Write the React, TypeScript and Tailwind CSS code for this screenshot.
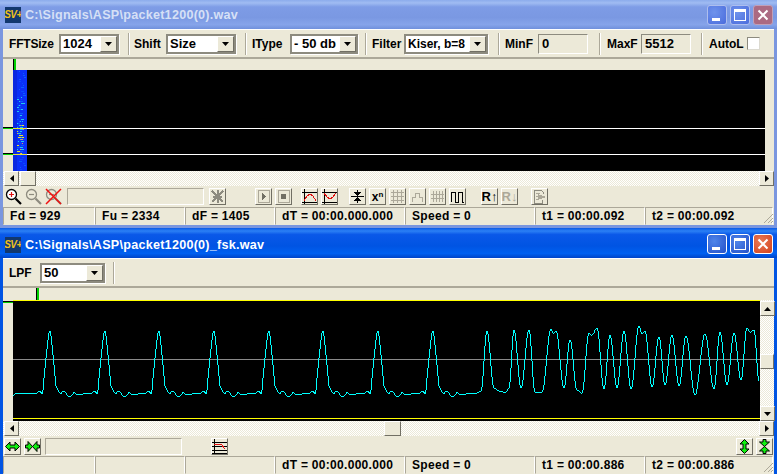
import React from "react";

const FONT = "font-['Liberation_Sans',Arial,sans-serif] font-bold text-[12px] leading-none text-black";
const RAISED = "border border-t-white border-l-white border-r-[#716f64] border-b-[#716f64] bg-[#ece9d8]";
const DITHER = "bg-[repeating-conic-gradient(#ffffff_0_25%,#ece9d8_0_50%)] bg-[length:2px_2px]";

// ---- signal data ----
const PULSE: [number, number][] = [
  [-12, 393], [-11, 392], [-9, 391], [-7, 394], [-6, 390], [-5, 378], [-3, 358], [-1, 340], [0, 333], [1, 331],
  [2, 336], [3, 345], [5, 365], [6, 376], [7, 386], [9, 390], [10, 392], [12, 394], [13, 392], [15, 391],
  [17, 393], [18, 395], [20, 397], [22, 396], [24, 394], [25, 392], [27, 394], [34, 394], [41, 393],
];
const PEAKS = [49, 104, 158, 213, 268, 322, 377, 432];
const BURST: [number, number][] = [
  [475, 393], [481, 391], [487, 331], [494, 388], [500, 391], [506, 392], [509, 388], [514, 330], [521, 388],
  [529, 330], [535, 392], [542, 392], [551, 329], [553, 333], [556, 331], [564, 388], [570, 340], [577, 390],
  [582, 393], [589, 333], [592, 335], [597, 328], [604, 389], [610, 335], [617, 388], [624, 331], [631, 389],
  [639, 326], [642, 334], [645, 331], [652, 387], [659, 337], [665, 385], [672, 335], [679, 386], [686, 336],
  [695, 395], [705, 334], [714, 389], [720, 332], [727, 385], [734, 333], [741, 380], [747, 328], [750, 332],
  [754, 330], [759, 381],
];

function wavePoints() {
  const pts: string[] = ["13,396", "15,394"];
  for (const p of PEAKS) for (const [dx, y] of PULSE) pts.push(p + dx + "," + y);
  for (let i = 0; i < BURST.length - 1; i++) {
    const [x0, y0] = BURST[i];
    const [x1, y1] = BURST[i + 1];
    for (let x = x0; x < x1; x++) {
      const t = (x - x0) / (x1 - x0);
      const y = y0 + ((y1 - y0) * (1 - Math.cos(t * Math.PI))) / 2;
      pts.push(x + "," + Math.round(y));
    }
  }
  pts.push("759,381");
  return pts.map((s) => {
    const [x, y] = s.split(",").map(Number);
    return x - 13 + "," + (y - 300);
  }).join(" ");
}

// spectrogram speckle, fixed seed so it's the same on every load
function speckle() {
  const out: { x: number; y: number; w: number; c: string }[] = [];
  let s = 17;
  const rnd = () => ((s = (s * 16807) % 2147483647) / 2147483647);
  for (let y = 1; y < 100; y += 2) {
    const hot = y > 26 && y < 84;
    const n = hot ? 3 : 1;
    for (let i = 0; i < n; i++) {
      const x = (hot ? 4 : 6) + Math.floor(rnd() * 6);
      const w = 1 + Math.floor(rnd() * 3);
      let c = rnd() > 0.5 ? "#0a5cff" : "#0a48ff";
      if (hot && rnd() > 0.5) c = "#20c8f0";
      if (y > 54 && y < 84 && rnd() > 0.5) c = rnd() > 0.4 ? "#f0e820" : "#f09050";
      out.push({ x, y, w, c });
    }
  }
  return out;
}

// ---- small pieces ----
function Arrow({ d = "down" }: { d?: "down" | "up" | "left" | "right" }) {
  const pts = { down: "0,0 7,0 3.5,4", up: "0,4 7,4 3.5,0", left: "4,0 4,7 0,3.5", right: "0,0 0,7 4,3.5" }[d];
  const box = d === "down" || d === "up" ? "0 0 7 4" : "0 0 4 7";
  return (
    <svg viewBox={box} className={d === "down" || d === "up" ? "w-[7px] h-[4px]" : "w-[4px] h-[7px]"}>
      <polygon points={pts} fill="#000" />
    </svg>
  );
}

function Combo({ value, className, tight }: { value: string; className: string; tight?: boolean }) {
  return (
    <div className={"h-[20px] flex items-stretch border-2 border-t-[#8d8b7f] border-l-[#8d8b7f] border-r-[#8d8b7f] border-b-[#8d8b7f] bg-white shadow-[1px_1px_0_#ffffff] " + className}>
      <span className={FONT + " flex-1 min-w-0 flex items-center pl-[2px] whitespace-nowrap overflow-hidden " + (tight ? "text-[12px]" : "text-[13px]")}>{value}</span>
      <span className={RAISED + " w-[17px] shrink-0 flex items-center justify-center border-r-[#8d8b7f] border-b-[#8d8b7f]"}>
        <Arrow />
      </span>
    </div>
  );
}

function Edit({ value }: { value: string }) {
  return (
    <div className={FONT + " w-[50px] h-[20px] pl-[3px] pt-[2px] text-[13px] border border-t-[#8d8b7f] border-l-[#8d8b7f] border-r-white border-b-white bg-[#ece9d8]"}>
      {value}
    </div>
  );
}

function Sep({ className = "" }: { className?: string }) {
  return <div className={"w-[2px] h-[22px] border-l border-l-[#aca899] border-r border-r-white " + className} />;
}

function Label({ children, className = "" }: { children: React.ReactNode; className?: string }) {
  return <span className={FONT + " " + className}>{children}</span>;
}

function WinButtons({ active }: { active: boolean }) {
  const base = "w-[20px] h-[20px] rounded-[3px] flex items-center justify-center ";
  const blue = active
    ? "border border-white bg-[radial-gradient(circle_at_35%_35%,#4f85ea,#2450c8)]"
    : "border border-[#aebeee] bg-[radial-gradient(circle_at_35%_35%,#6f93ec,#4a6bdc)]";
  const red = active
    ? "border border-white bg-[radial-gradient(circle_at_35%_35%,#ea7a55,#d2401c)]"
    : "border border-[#c0a0b8] bg-[#ab6a82]";
  return (
    <div className="flex items-center gap-[3px]">
      <div className={base + blue + " items-end pb-[3px]"}>
        <div className="w-[8px] h-[3px] bg-white -translate-x-[1px]" />
      </div>
      <div className={base + blue}>
        <div className="w-[12px] h-[12px] border border-white border-t-[3px]" />
      </div>
      <div className={base + red}>
        <svg viewBox="0 0 12 12" className="w-[12px] h-[12px]">
          <path d="M1.5 1.5 L10.5 10.5 M10.5 1.5 L1.5 10.5" stroke="#fff" strokeWidth="2" />
        </svg>
      </div>
    </div>
  );
}

function TitleBar({ title, active }: { title: string; active: boolean }) {
  const bg = active
    ? "h-[30px] pt-[2px] bg-[linear-gradient(180deg,#0a5ae6_0%,#2b80f5_10%,#0a58e8_22%,#0054e3_60%,#0060f0_85%,#0044c8_100%)]"
    : "h-[29px] bg-[linear-gradient(180deg,#8cacec_0%,#a0bcf2_10%,#7e9ce6_24%,#7a98e2_60%,#86a4ea_85%,#7090dc_100%)]";
  return (
    <div className={"shrink-0 flex items-center pl-[5px] pr-[4px] " + bg}>
      <div className="w-[16px] h-[16px] mt-[1px] bg-[#12386e] flex items-center justify-center overflow-hidden">
        <span className="font-['Liberation_Sans',sans-serif] font-bold italic text-[10px] leading-none tracking-[-0.5px] text-[#f0c020]">
          SV+
        </span>
      </div>
      <span className={"ml-[4px] mt-[2px] flex-1 font-['Liberation_Sans',sans-serif] font-bold text-[12.6px] tracking-[0.25px] " + (active ? "text-white" : "text-[#d6e0f6]")}>
        {title}
      </span>
      <WinButtons active={active} />
    </div>
  );
}

function ScrollBtn({ d, className = "" }: { d: "left" | "right" | "up" | "down"; className?: string }) {
  return (
    <div className={RAISED + " w-[15px] h-[15px] shrink-0 flex items-center justify-center " + className}>
      <Arrow d={d} />
    </div>
  );
}

function StatusBar({ cells }: { cells: [string, string][] }) {
  return (
    <div className="h-[18px] shrink-0 flex items-stretch bg-[#ece9d8] relative">
      {cells.map(([text, w], i) => (
        <div
          key={i}
          className={FONT + " " + w + " h-full shrink-0 flex items-center pl-[6px] text-[12.5px] tracking-[0.3px] border border-t-[#aca899] border-l-[#aca899] border-r-white border-b-transparent"}
        >
          {text}
        </div>
      ))}
      <svg viewBox="0 0 12 12" className="absolute right-[0px] bottom-[1px] w-[12px] h-[12px]">
        <path d="M11 2 L2 11 M11 6 L6 11 M11 9 L9 11" stroke="#aca899" strokeWidth="1" />
      </svg>
    </div>
  );
}

function Tool({ className = "", children, flat }: { className?: string; children: React.ReactNode; flat?: boolean }) {
  return (
    <div className={(flat ? "" : RAISED + " ") + "w-[17px] h-[17px] shrink-0 flex items-center justify-center " + className}>
      {children}
    </div>
  );
}

const Icon = ({ children }: { children: React.ReactNode }) => (
  <svg viewBox="0 0 15 15" className="w-[15px] h-[15px]" fill="none" shapeRendering="crispEdges">
    {children}
  </svg>
);

function Magnifier({ dim, plus }: { dim?: boolean; plus?: boolean }) {
  const c = dim ? "#8d8b7f" : "#000";
  return (
    <svg viewBox="0 0 17 17" className="w-[17px] h-[17px]" fill="none">
      <circle cx="6.5" cy="6.5" r="5" stroke={c} strokeWidth="1.3" fill={dim ? "#ece9d8" : "#fff"} />
      <path d="M10.5 10.5 L16 16" stroke={c} strokeWidth="2.2" />
      <path d={plus ? "M4 6.5 H9 M6.5 4 V9" : "M4 6.5 H9"} stroke={dim ? "#8d8b7f" : "#e01010"} strokeWidth="1.2" />
    </svg>
  );
}

function DoubleArrow({ vertical, inward }: { vertical?: boolean; inward?: boolean }) {
  const h = inward
    ? "M0.5 6 H3 V2.5 L7.5 7.5 L3 12.5 V9 H0.5 Z M14.5 6 H12 V2.5 L7.5 7.5 L12 12.5 V9 H14.5 Z"
    : "M0.5 7.5 L5 3 L5 6 L10 6 L10 3 L14.5 7.5 L10 12 L10 9 L5 9 L5 12 Z";
  return (
    <svg viewBox="0 0 15 15" className="w-[15px] h-[15px]">
      <path d={h} fill="#10f010" stroke="#000" strokeWidth="1" transform={vertical ? "rotate(90 7.5 7.5)" : undefined} />
    </svg>
  );
}

function ChartIcon({ curve, color = "#e01010" }: { curve: string; color?: string }) {
  return (
    <Icon>
      <path d="M2 0 V15 M0 13 H15 M0 3 H15" stroke="#000" />
      <path d={curve} stroke={color} strokeWidth="1" />
    </Icon>
  );
}

const GRID = "M1 3 H14 M1 7 H14 M1 11 H14 M3 1 V14 M7 1 V14 M11 1 V14";

// ---- windows ----
function TopToolbar() {
  return (
    <div className="h-[30px] shrink-0 flex items-center bg-[#ece9d8] border-t border-t-white border-b-2 border-b-[#aca899] pl-[6px] mt-0">
      <Label className="w-[50px] tracking-[-0.2px]">FFTSize</Label>
      <Combo value="1024" className="w-[60px]" />
      <Sep className="ml-[9px]" />
      <Label className="ml-[4px] w-[32px]">Shift</Label>
      <Combo value="Size" className="w-[70px]" />
      <Sep className="ml-[9px]" />
      <Label className="ml-[5px] w-[38px]">IType</Label>
      <Combo value="- 50 db" className="w-[68px]" />
      <Sep className="ml-[7px]" />
      <Label className="ml-[5px] w-[32px]">Filter</Label>
      <Combo value="Kiser, b=8" className="w-[84px]" tight />
      <Sep className="ml-[10px]" />
      <Label className="ml-[5px] w-[33px]">MinF</Label>
      <Edit value="0" />
      <Sep className="ml-[11px]" />
      <Label className="ml-[6px] w-[34px]">MaxF</Label>
      <Edit value="5512" />
      <Sep className="ml-[10px]" />
      <Label className="ml-[6px] w-[38px]">AutoL</Label>
      <div className="w-[13px] h-[13px] border border-t-[#8d8b7f] border-l-[#8d8b7f] border-r-[#dcdad0] border-b-[#dcdad0] bg-white" />
    </div>
  );
}

function TopTools() {
  return (
    <div className="h-[21px] shrink-0 flex items-center bg-[#ece9d8] pl-[2px]">
      <Tool flat><Magnifier plus /></Tool>
      <Tool flat className="ml-[3px]"><Magnifier dim /></Tool>
      <Tool flat className="ml-[3px] relative">
        <Magnifier dim />
        <svg viewBox="0 0 17 17" className="absolute inset-0 w-[17px] h-[17px]">
          <path d="M1 1 L16 16 M16 1 L1 16" stroke="#f01010" strokeWidth="1.5" />
        </svg>
      </Tool>
      <div className="ml-[5px] w-[137px] h-[17px] border border-t-[#aca899] border-l-[#aca899] border-r-white border-b-white" />
      <Tool className="ml-[5px]">
        <Icon><path d="M2 2 L13 13 M13 2 L2 13 M7.5 1 V14 M3 7.5 H12" stroke="#8d8b7f" strokeWidth="2" /></Icon>
      </Tool>
      <Tool className="ml-[29px]">
        <Icon><path d="M2 1.5 H13 V13.5 H2 Z" stroke="#aca899" /><polygon points="6,4 6,11 10.5,7.5" fill="#716f64" /></Icon>
      </Tool>
      <Tool className="ml-[3px]">
        <Icon><path d="M2 1.5 H13 V13.5 H2 Z" stroke="#aca899" /><rect x="5" y="5" width="5" height="5" fill="#716f64" /></Icon>
      </Tool>
      <Tool className="ml-[9px]"><ChartIcon curve="M2 12 L5 7 L8 5 L11 7 L14 12" /></Tool>
      <Tool className="ml-[3px]"><ChartIcon curve="M2 4 L5 8 L8 10 L11 8 L14 4" /></Tool>
      <Tool className="ml-[11px]">
        <Icon><path d="M1 7.5 H14" stroke="#000" /><path d="M7.5 1 V14" stroke="#000" /><polygon points="4,3 11,3 7.5,7" fill="#000" /><polygon points="4,12 11,12 7.5,8" fill="#000" /></Icon>
      </Tool>
      <Tool className="ml-[3px]">
        <span className="font-['Liberation_Sans',sans-serif] font-bold text-[12px] leading-none text-black">x<sup className="text-[8px]">n</sup></span>
      </Tool>
      <Tool className="ml-[3px]"><Icon><path d={GRID} stroke="#aca899" /></Icon></Tool>
      <Tool className="ml-[3px]"><Icon><path d="M2 13 V8 H5 V4 H9 V8 H12 V13" stroke="#aca899" /></Icon></Tool>
      <Tool className="ml-[3px]"><Icon><path d="M1 5 H14 M1 9 H14 M3 2 V13 M6 2 V13 M9 2 V13 M12 2 V13" stroke="#aca899" /></Icon></Tool>
      <Tool className="ml-[3px]"><Icon><path d="M1 13 V3 H5 V13 H8 V3 H12 V13 H14" stroke="#000" /></Icon></Tool>
      <Tool className="ml-[15px]">
        <span className="font-['Liberation_Sans',sans-serif] font-bold text-[13px] leading-none text-black">R↑</span>
      </Tool>
      <Tool className="ml-[3px]">
        <span className="font-['Liberation_Sans',sans-serif] font-bold text-[13px] leading-none text-[#aca899]">R↓</span>
      </Tool>
      <Tool className="ml-[13px]">
        <Icon><path d="M2 1 H9 L11 3 V5 M2 1 V14 H10 V11" stroke="#8d8b7f" /><path d="M4 4 H8 M4 7 H6 M4 10 H6" stroke="#aca899" /><polygon points="6,5 14,8 6,11" fill="#aca899" /></Icon>
      </Tool>
    </div>
  );
}

function BottomTools() {
  return (
    <div className="h-[20px] shrink-0 flex items-center bg-[#ece9d8] pl-[1px]">
      <Tool><DoubleArrow /></Tool>
      <Tool className="ml-[3px]"><DoubleArrow inward /></Tool>
      <div className="ml-[4px] w-[137px] h-[17px] border border-t-[#aca899] border-l-[#aca899] border-r-white border-b-white" />
      <Tool className="ml-[29px]">
        <Icon><path d="M2 0 V15 M0 14 H15 M0 3 H15 M0 7 H15 M0 11 H15" stroke="#000" /><path d="M2 5 H9 L13 10" stroke="#e01010" /></Icon>
      </Tool>
      <div className="flex-1" />
      <Tool><DoubleArrow vertical /></Tool>
      <Tool className="ml-[3px] mr-[1px]"><DoubleArrow vertical inward /></Tool>
    </div>
  );
}

function SpectrumPlot() {
  const spots = speckle();
  return (
    <svg viewBox="0 0 752 101" className="w-[752px] h-[101px] block bg-black" shapeRendering="crispEdges">
      <rect x="0" y="0" width="14" height="101" fill="#0a30f8" />
      <rect x="0" y="0" width="4" height="101" fill="#0a28e0" />
      {spots.map((p, i) => (
        <rect key={i} x={p.x} y={p.y} width={p.w} height="1" fill={p.c} />
      ))}
      <rect x="0" y="58" width="752" height="1" fill="#ffffff" />
      <rect x="0" y="84" width="752" height="1" fill="#ffffff" />
      <rect x="0" y="58" width="14" height="1" fill="#e8e030" />
      <rect x="0" y="84" width="14" height="1" fill="#e8e030" />
    </svg>
  );
}

function WavePlot() {
  return (
    <svg viewBox="0 0 747 121" className="w-[747px] h-[121px] block bg-black" shapeRendering="crispEdges">
      <rect x="0" y="0" width="747" height="1" fill="#ffff00" />
      <rect x="0" y="118" width="747" height="1" fill="#ffff00" />
      <rect x="0" y="59" width="747" height="1" fill="#8a8a8a" />
      <polyline points={wavePoints()} fill="none" stroke="#00ffff" strokeWidth="1" />
    </svg>
  );
}

export default function App() {
  return (
    <div className="w-[777px] h-[474px] overflow-hidden bg-[#0054e3]">
      {/* spectrum window */}
      <div className="h-[228px] flex flex-col bg-[#7a96df] px-[3px] pb-[3px]">
        <div className="-mx-[3px]">
          <TitleBar title={"C:\\Signals\\ASP\\packet1200(0).wav"} active={false} />
        </div>
        <TopToolbar />
        <div className="h-[11px] shrink-0 bg-[#ece9d8] relative">
          <div className="absolute left-[10px] top-0 w-[3px] h-[11px] bg-[#00d000] border-l border-l-black" />
        </div>
        <div className="h-[101px] shrink-0 flex bg-[#ece9d8] relative">
          <div className="w-[10px] shrink-0" />
          <SpectrumPlot />
          <div className="flex-1" />
          <div className="absolute left-0 top-[58px] w-[10px] h-[1px] bg-[#00d000] shadow-[0_-1px_0_#000]" />
          <div className="absolute left-0 top-[84px] w-[10px] h-[1px] bg-[#00d000] shadow-[0_-1px_0_#000]" />
        </div>
        <div className={"h-[15px] shrink-0 flex " + DITHER}>
          <ScrollBtn d="left" className="ml-[1px]" />
          <div className={RAISED + " w-[16px] h-[15px] ml-[1px]"} />
          <div className="flex-1" />
          <ScrollBtn d="right" />
        </div>
        <TopTools />
        <StatusBar
          cells={[
            ["Fd = 929", "w-[92px]"],
            ["Fu = 2334", "w-[90px]"],
            ["dF = 1405", "w-[90px]"],
            ["dT = 00:00.000.000", "w-[130px]"],
            ["Speed = 0", "w-[130px]"],
            ["t1 = 00:00.092", "w-[110px]"],
            ["t2 = 00:00.092", "w-[128px]"],
          ]}
        />
      </div>

      {/* fsk window */}
      <div className="h-[246px] flex flex-col bg-[#0054e3] px-[3px]">
        <div className="-mx-[3px]">
          <TitleBar title={"C:\\Signals\\ASP\\packet1200(0)_fsk.wav"} active />
        </div>
        <div className="h-[30px] shrink-0 flex items-center bg-[#ece9d8] border-t border-t-white border-b-2 border-b-[#aca899] pl-[6px]">
          <Label className="w-[31px]">LPF</Label>
          <Combo value="50" className="w-[65px]" />
          <Sep className="ml-[8px]" />
        </div>
        <div className="h-[12px] shrink-0 bg-[#ece9d8] relative">
          <div className="absolute left-[33px] top-0 w-[3px] h-[12px] bg-[#00d000] border-l border-l-black" />
        </div>
        <div className="h-[121px] shrink-0 flex bg-[#ece9d8] relative">
          <div className="w-[10px] shrink-0" />
          <WavePlot />
          <div className={"w-[14px] shrink-0 flex flex-col " + DITHER}>
            <ScrollBtn d="up" className="w-[14px] mt-[1px]" />
            <div className="h-[38px] shrink-0" />
            <div className={RAISED + " w-[14px] h-[15px] shrink-0"} />
            <div className="flex-1" />
            <ScrollBtn d="down" className="w-[14px]" />
          </div>
          <div className="absolute left-0 top-[2px] w-[10px] h-[1px] bg-[#00d000] shadow-[0_-1px_0_#000]" />
        </div>
        <div className={"h-[15px] shrink-0 flex " + DITHER}>
          <ScrollBtn d="left" className="ml-[1px]" />
          <div className="w-[365px]" />
          <div className={RAISED + " w-[17px] h-[15px]"} />
          <div className="flex-1" />
          <ScrollBtn d="right" />
        </div>
        <BottomTools />
        <StatusBar
          cells={[
            ["", "w-[92px]"],
            ["", "w-[90px]"],
            ["", "w-[90px]"],
            ["dT = 00:00.000.000", "w-[130px]"],
            ["Speed = 0", "w-[130px]"],
            ["t1 = 00:00.886", "w-[110px]"],
            ["t2 = 00:00.886", "w-[128px]"],
          ]}
        />
      </div>
    </div>
  );
}
